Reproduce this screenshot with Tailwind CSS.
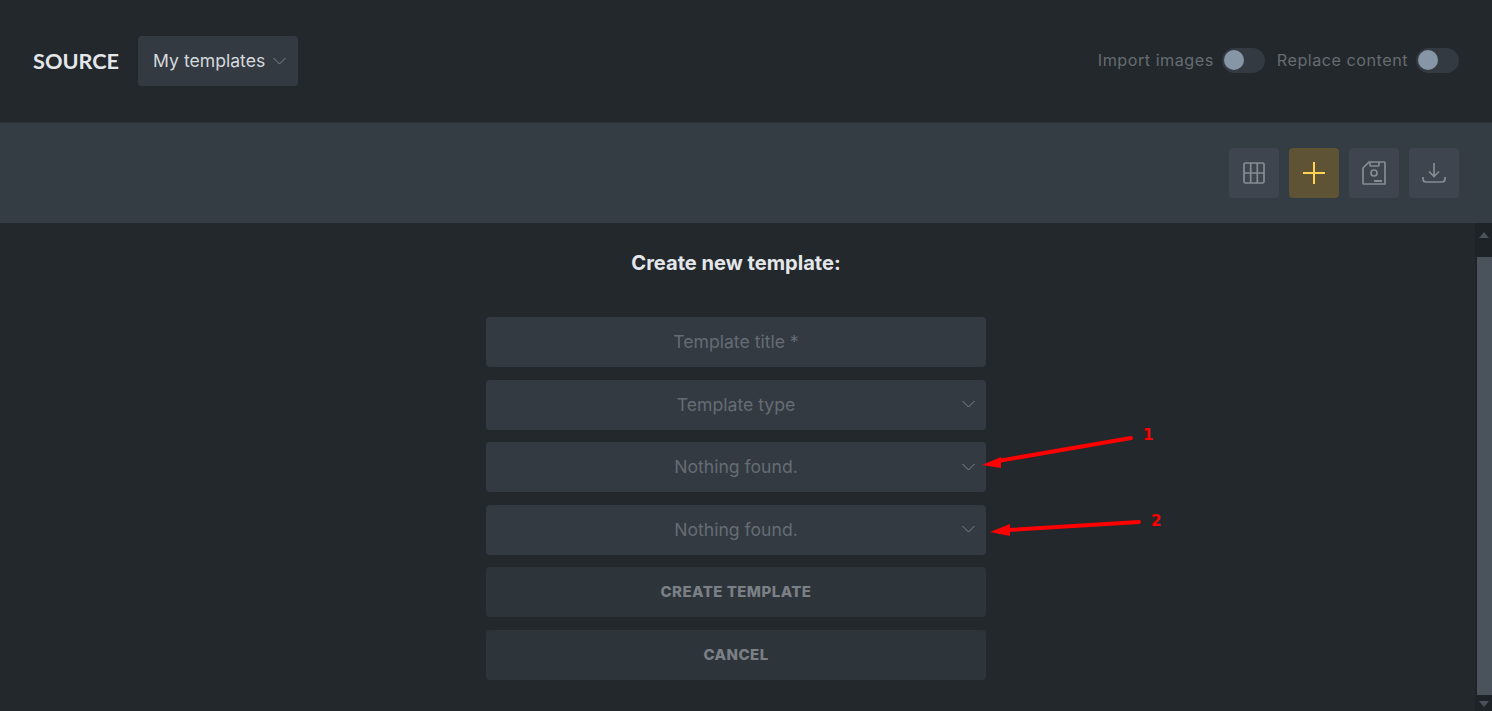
<!DOCTYPE html>
<html lang="en">
<head>
    <meta charset="UTF-8">
    <meta name="viewport" content="width=device-width, initial-scale=1.0">
    <title>Templates</title>
    <script src="https://cdn.jsdelivr.net/npm/@tailwindcss/browser@4"></script>
</head>
<body class="bg-[#23282c] font-['Inter',sans-serif] h-[711px] overflow-hidden relative">

    <!-- Top bar -->
    <header class="h-[123px] flex items-center justify-between pl-[33px] pr-[33px] border-b border-[#2b3136]">
        <div class="flex items-center gap-[19px]">
            <span class="font-['Lato',sans-serif] font-bold text-[21.7px] text-[#e4e7ea]">SOURCE</span>
            <div class="w-[160px] h-[50px] rounded bg-[#333a42] flex items-center pl-[15px] gap-[8px] text-[#d5d9dd] text-[17.6px]">
                My templates
                <svg class="w-[13px] h-[8px]" viewBox="0 0 13 8" fill="none" stroke="#7d848b" stroke-width="1"><path d="M.5 1l6 6 6-6"/></svg>
            </div>
        </div>
        <div class="flex items-center mb-[2px] text-[16.2px] tracking-[0.5px] text-[#666c72]">
            <span>Import images</span>
            <div class="ml-[8px] w-[43px] h-[25px] rounded-full bg-[#333a42] flex items-center pl-[2px]">
                <div class="w-[20px] h-[20px] rounded-full bg-[#8796a6]"></div>
            </div>
            <span class="ml-[12px]">Replace content</span>
            <div class="ml-[8px] w-[43px] h-[25px] rounded-full bg-[#333a42] flex items-center pl-[2px]">
                <div class="w-[20px] h-[20px] rounded-full bg-[#8796a6]"></div>
            </div>
        </div>
    </header>

    <!-- Toolbar -->
    <div class="h-[100px] bg-[#343c44] flex items-center justify-end gap-[10px] pr-[33px]">
        <button class="w-[50px] h-[50px] rounded bg-[#3e454e] flex items-center justify-center">
            <svg class="w-[22px] h-[22px]" viewBox="0 0 22 22" fill="none" stroke="#868c92" stroke-width="1.7"><rect x="1" y="1" width="20" height="20" rx="1.5"/><path d="M7.7 1v20M14.3 1v20M1 11h20"/></svg>
        </button>
        <button class="w-[50px] h-[50px] rounded bg-[#5e5335] flex items-center justify-center">
            <svg class="w-[24px] h-[24px]" viewBox="0 0 24 24" fill="none" stroke="#ffd454" stroke-width="2"><path d="M12 1v22M1 12h22"/></svg>
        </button>
        <button class="w-[50px] h-[50px] rounded bg-[#3e454e] flex items-center justify-center">
            <svg class="w-[24px] h-[24px]" viewBox="0 0 24 24" fill="none" stroke="#868c92" stroke-width="1.7"><path d="M7 1h15a1 1 0 0 1 1 1v21H2a1 1 0 0 1-1-1V7z"/><path d="M8 1v3a1 1 0 0 0 1 1h7a1 1 0 0 0 1-1V1"/><circle cx="12" cy="12" r="3"/><path d="M12 20h8" stroke-width="2"/></svg>
        </button>
        <button class="w-[50px] h-[50px] rounded bg-[#3e454e] flex items-center justify-center">
            <svg class="w-[24px] h-[22px]" viewBox="0 0 24 22" fill="none" stroke="#868c92" stroke-width="1.7"><path d="M12 1v13M7 9.5l5 5 5-5"/><path d="M1 15v2a3 3 0 0 0 3 3h16a3 3 0 0 0 3-3v-2"/></svg>
        </button>
    </div>

    <!-- Main area with scrollbar -->
    <div class="flex h-[488px]">
        <main class="flex-1 flex flex-col items-center pr-[3px]">
            <h2 class="mt-[28px] h-[24px] leading-[24px] text-[20.1px] font-bold text-[#e4e7ea]">Create new template:</h2>
            <div class="mt-[42px] w-[500px] flex flex-col gap-[12.6px]">
                <div class="h-[50px] pt-[1px] rounded bg-[#333a42] flex items-center justify-center text-[17.6px] text-[#666c74]">Template title *</div>
                <div class="relative h-[50px] pt-[1px] rounded bg-[#333a42] flex items-center justify-center text-[17.6px] text-[#666c74]">
                    Template type
                    <svg class="absolute right-[11px] top-[20px] w-[13px] h-[8px]" viewBox="0 0 13 8" fill="none" stroke="#7d848b" stroke-width="1"><path d="M.5 1l6 6 6-6"/></svg>
                </div>
                <div class="relative h-[50px] pt-[1px] rounded bg-[#333a42] flex items-center justify-center text-[17.6px] text-[#666c74]">
                    Nothing found.
                    <svg class="absolute right-[11px] top-[21px] w-[13px] h-[8px]" viewBox="0 0 13 8" fill="none" stroke="#7d848b" stroke-width="1"><path d="M.5 1l6 6 6-6"/></svg>
                </div>
                <div class="relative h-[50px] pt-[1px] rounded bg-[#333a42] flex items-center justify-center text-[17.6px] text-[#666c74]">
                    Nothing found.
                    <svg class="absolute right-[11px] top-[20px] w-[13px] h-[8px]" viewBox="0 0 13 8" fill="none" stroke="#7d848b" stroke-width="1"><path d="M.5 1l6 6 6-6"/></svg>
                </div>
                <button class="h-[50px] pb-[1px] rounded bg-[#2d343a] text-[15px] font-extrabold tracking-[0.45px] text-[#7b8086]">CREATE TEMPLATE</button>
                <button class="h-[50px] rounded bg-[#2d343a] text-[15px] font-extrabold tracking-[0.45px] text-[#7b8086]">CANCEL</button>
            </div>
        </main>

        <!-- Scrollbar -->
        <div class="w-[17px] bg-[#1e2327] flex flex-col items-end">
            <div class="w-full h-[34px] flex justify-center pt-[9px]">
                <svg class="w-[10px] h-[6px]" viewBox="0 0 10 6" fill="#4a525b"><path d="M5 0l5 6H0z"/></svg>
            </div>
            <div class="w-[15px] h-[438px] bg-[#4a525c]"></div>
            <div class="flex-1 w-full flex justify-center pt-[6px]">
                <svg class="w-[10px] h-[6px]" viewBox="0 0 10 6" fill="#4a525b"><path d="M5 6l5-6H0z"/></svg>
            </div>
        </div>
    </div>

    <!-- Red annotations drawn over the screenshot -->
    <svg class="absolute left-0 top-0 w-[1492px] h-[711px] pointer-events-none" viewBox="0 0 1492 711" fill="none">
        <path d="M1131 438L998 461" stroke="#fe0000" stroke-width="4" stroke-linecap="round"/>
        <path d="M982 465L1001 457L1001 468z" fill="#fe0000"/>
        <path d="M1139 522L1008 530" stroke="#fe0000" stroke-width="4" stroke-linecap="round"/>
        <path d="M990 532L1010 524L1010 536z" fill="#fe0000"/>
    </svg>
    <span class="absolute left-[1143px] top-[425px] font-['DejaVu_Sans',sans-serif] font-bold text-[15px] leading-[20px] text-[#fe0000]">1</span>
    <span class="absolute left-[1151px] top-[511px] font-['DejaVu_Sans',sans-serif] font-bold text-[15px] leading-[20px] text-[#fe0000]">2</span>

</body>
</html>
